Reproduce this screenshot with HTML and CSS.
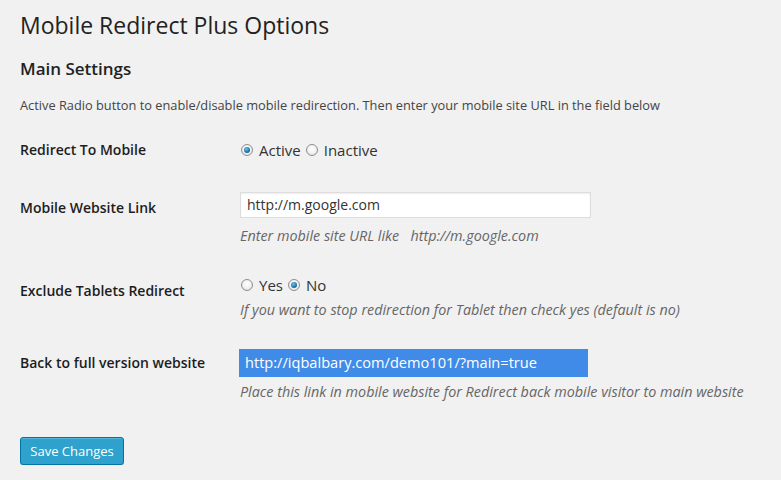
FILE: index.html
```html
<!DOCTYPE html>
<html>
<head>
<meta charset="utf-8">
<link rel="stylesheet" href="styles.css">
</head>
<body>
<div class="wrap">
  <h1 class="title">Mobile Redirect Plus Options</h1>
  <h2 class="section">Main Settings</h2>
  <p class="intro">Active Radio button to enable/disable mobile redirection. Then enter your mobile site URL in the field below</p>
  <div class="form">
    <div class="row row-1">
      <div class="label">Redirect To Mobile</div>
      <div class="field">
        <div class="radios">
          <span class="radio checked"></span><span class="opt">Active</span>
          <span class="radio"></span><span class="opt">Inactive</span>
        </div>
      </div>
    </div>
    <div class="row row-2">
      <div class="label">Mobile Website Link</div>
      <div class="field">
        <div class="input">http://m.google.com</div>
        <div class="desc">Enter mobile site URL like &nbsp; http://m.google.com</div>
      </div>
    </div>
    <div class="row row-3">
      <div class="label">Exclude Tablets Redirect</div>
      <div class="field">
        <div class="radios">
          <span class="radio"></span><span class="opt">Yes</span>
          <span class="radio checked"></span><span class="opt">No</span>
        </div>
        <div class="desc">If you want to stop redirection for Tablet then check yes (default is no)</div>
      </div>
    </div>
    <div class="row row-4">
      <div class="label">Back to full version website</div>
      <div class="field">
        <div class="selected">http://iqbalbary.com/demo101/?main=true</div>
        <div class="desc">Place this link in mobile website for Redirect back mobile visitor to main website</div>
      </div>
    </div>
  </div>
  <div class="actions">
    <button class="button-primary">Save Changes</button>
  </div>
</div>
</body>
</html>
```
FILE: styles.css
```css
html, body {
  margin: 0;
  padding: 0;
  background: #f1f1f1;
}
body {
  font-family: "Open Sans", "Liberation Sans", sans-serif;
  color: #444;
  font-size: 13px;
}
.wrap {
  padding: 0 20px;
}
.title {
  margin: 0;
  padding-top: 10px;
  font-size: 23px;
  line-height: 30px;
  font-weight: 400;
  color: #222;
}
.section {
  margin: 17px 0 0;
  font-size: 17px;
  line-height: 24px;
  font-weight: 600;
  color: #222;
}
.intro {
  margin: 14px 0 0;
  font-size: 12.8px;
  line-height: 20px;
  color: #444;
}
.form {
  margin-top: 4px;
}
.row {
  display: grid;
  grid-template-columns: 220px 1fr;
}
.label {
  font-size: 14px;
  line-height: 22px;
  font-weight: 600;
  color: #1d1d1d;
  padding-top: 20px;
}
.field {
  font-size: 15px;
  line-height: 22px;
}
.row-1 { height: 58px; }
.row-1 .field { padding-top: 20px; }
.row-2 { height: 83px; }
.row-2 .field { padding-top: 15px; }
.row-3 { height: 72px; }
.row-3 .field { padding-top: 14px; }
.row-4 .field { padding-top: 17px; }
.radios {
  display: flex;
  align-items: center;
  height: 22px;
}
.radio {
  box-sizing: border-box;
  width: 12px;
  height: 12px;
  border-radius: 50%;
  border: 1px solid #8f8f8f;
  background: radial-gradient(circle at 50% 40%, #fff 0%, #f2f2f2 50%, #d6d6d6 100%);
  margin-left: 1px;
  margin-right: 6px;
  position: relative;
}
.radio.checked::after {
  content: "";
  position: absolute;
  left: 2px;
  top: 2px;
  width: 6px;
  height: 6px;
  border-radius: 50%;
  background: radial-gradient(circle at 40% 35%, #6fc3ec 0%, #1e7bb0 55%, #0b3e66 100%);
}
.opt {
  margin-right: 4px;
  color: #333;
}
.input {
  box-sizing: border-box;
  width: 351px;
  height: 26px;
  background: #fff;
  border: 1px solid #ddd;
  box-shadow: inset 0 1px 2px rgba(0,0,0,0.07);
  padding: 0 6px;
  font-size: 14px;
  line-height: 24px;
  color: #333;
}
.desc {
  font-size: 14.35px;
  line-height: 20px;
  font-style: italic;
  color: #666;
}
.row-2 .desc { margin-top: 8px; }
.row-3 .desc { margin-top: 4px; }
.row-4 .desc { margin-top: 5px; }
.selected {
  box-sizing: border-box;
  width: 349px;
  height: 28px;
  margin-left: -1px;
  background: #418be8;
  color: #fff;
  padding-left: 6px;
  font-size: 14.6px;
  line-height: 26px;
}
.actions {
  padding-top: 35px;
}
.button-primary {
  box-sizing: border-box;
  height: 28px;
  width: 104px;
  padding: 0 0 1px;
  font-family: "Open Sans", "Liberation Sans", sans-serif;
  font-size: 13px;
  color: #fff;
  background: #2ea2cc;
  border: 1px solid #0074a2;
  border-radius: 3px;
  box-shadow: inset 0 1px 0 rgba(120,200,230,0.5), 0 1px 0 rgba(0,0,0,0.15);
}
```
